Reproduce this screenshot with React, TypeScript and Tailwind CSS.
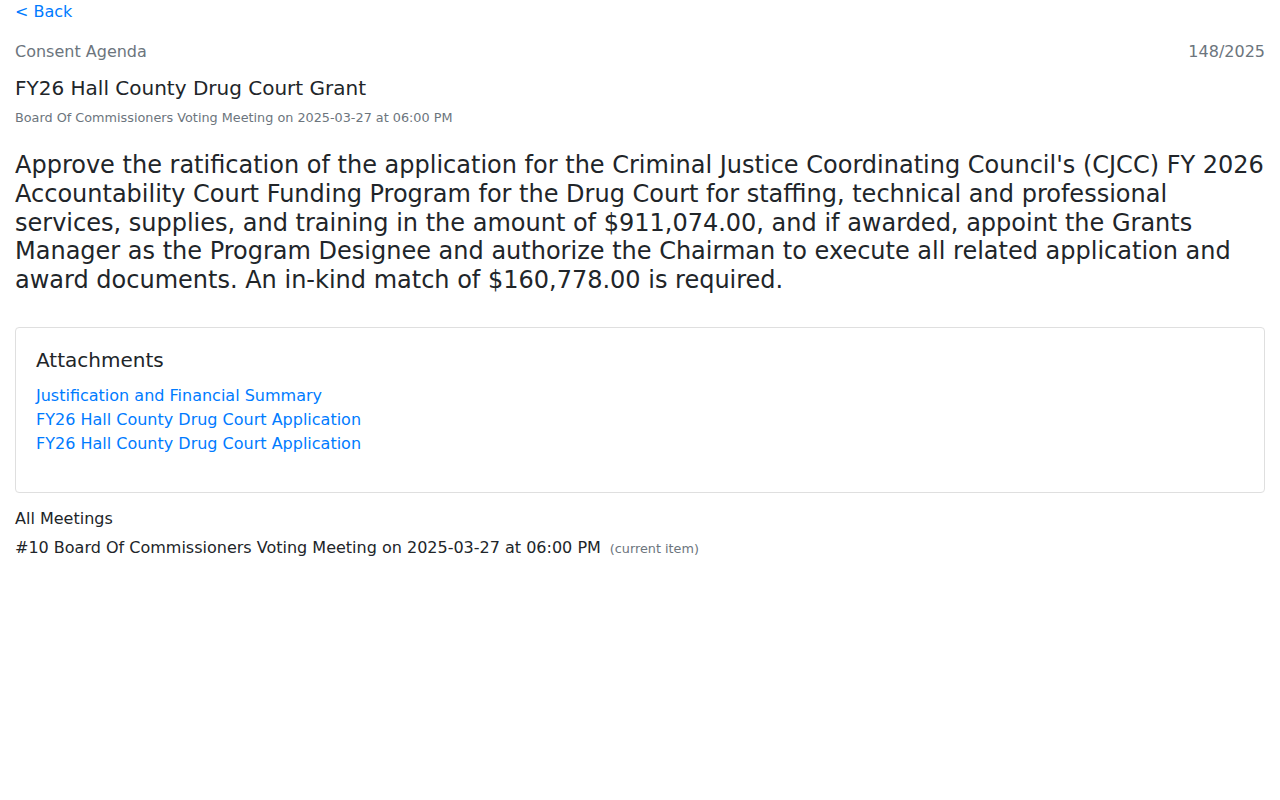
const attachments = [
  "Justification and Financial Summary",
  "FY26 Hall County Drug Court Application",
  "FY26 Hall County Drug Court Application",
];

export default function App() {
  return (
    <div className="min-h-screen bg-white px-[15px] text-[16px] leading-[24px] text-[#212529] font-['DejaVu_Sans',sans-serif]">
      <a href="#" className="block text-[#007bff] hover:underline">
        &lt; Back
      </a>

      <div className="mt-[16px] flex justify-between text-[#6c757d]">
        <span>Consent Agenda</span>
        <span>148/2025</span>
      </div>

      <h5 className="mt-[12px] text-[20px] leading-[24px]">
        FY26 Hall County Drug Court Grant
      </h5>
      <div className="mt-[8px] text-[12.8px] leading-[19px] text-[#6c757d]">
        Board Of Commissioners Voting Meeting on 2025-03-27 at 06:00 PM
      </div>

      <h4 className="mt-[24px] text-[24px] leading-[28.8px]">
        Approve the ratification of the application for the Criminal Justice
        Coordinating Council's (CJCC) FY 2026 Accountability Court Funding
        Program for the Drug Court for staffing, technical and professional
        services, supplies, and training in the amount of $911,074.00, and if
        awarded, appoint the Grants Manager as the Program Designee and
        authorize the Chairman to execute all related application and award
        documents. An in-kind match of $160,778.00 is required.
      </h4>

      <div className="mt-[32px] rounded-[4px] border border-[#dfdfdf] px-[20px] pt-[20px] pb-[36px]">
        <h5 className="text-[20px] leading-[24px]">Attachments</h5>
        <ul className="mt-[12px] flex flex-col">
          {attachments.map((a, i) => (
            <li key={i}>
              <a href="#" className="text-[#007bff] hover:underline">
                {a}
              </a>
            </li>
          ))}
        </ul>
      </div>

      <div className="mt-[14px]">
        <div>All Meetings</div>
        <div className="mt-[5px] flex items-baseline gap-[9px]">
          <span>#10 Board Of Commissioners Voting Meeting on 2025-03-27 at 06:00 PM</span>
          <span className="text-[12.8px] text-[#6c757d]">(current item)</span>
        </div>
      </div>
    </div>
  );
}
